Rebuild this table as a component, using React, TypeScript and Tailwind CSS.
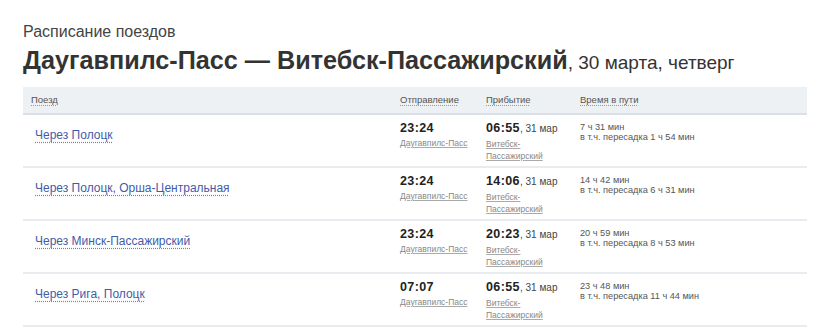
const rows = [
  { via: "Через Полоцк", dep: "23:24", arr: "06:55", dur: "7 ч 31 мин", wait: "в т.ч. пересадка 1 ч 54 мин" },
  { via: "Через Полоцк, Орша-Центральная", dep: "23:24", arr: "14:06", dur: "14 ч 42 мин", wait: "в т.ч. пересадка 6 ч 31 мин" },
  { via: "Через Минск-Пассажирский", dep: "23:24", arr: "20:23", dur: "20 ч 59 мин", wait: "в т.ч. пересадка 8 ч 53 мин" },
  { via: "Через Рига, Полоцк", dep: "07:07", arr: "06:55", dur: "23 ч 48 мин", wait: "в т.ч. пересадка 11 ч 44 мин" },
];

export default function App() {
  return (
    <div className="h-[332px] w-[820px] bg-white pl-[23px] pt-[22px] font-['Liberation_Sans',Arial,sans-serif] text-[#333]">
      <div className="text-[16px] leading-[19px] text-[#444]">Расписание поездов</div>
      <h1 className="mt-[4px] text-[19px] leading-[30px] text-[#333]">
        <span className="text-[25.2px] font-bold">Даугавпилс-Пасс — Витебск-Пассажирский</span>, 30 марта, четверг
      </h1>

      <div className="mt-[9px] w-[784px]">
        <div className="flex h-[28px] items-center border-b-2 border-[#d9e0e7] bg-[#edf1f4] text-[9.5px] text-[#555]">
          <div className="w-[369px] pl-[8px]">
            <span className="underline decoration-dotted decoration-[#999] underline-offset-2">Поезд</span>
          </div>
          <div className="w-[86px] pl-[8px]">
            <span className="underline decoration-dotted decoration-[#999] underline-offset-2">Отправление</span>
          </div>
          <div className="w-[94px] pl-[8px]">
            <span className="underline decoration-dotted decoration-[#999] underline-offset-2">Прибытие</span>
          </div>
          <div className="pl-[8px]">
            <span className="underline decoration-dotted decoration-[#999] underline-offset-2">Время в пути</span>
          </div>
        </div>

        {rows.map((r) => (
          <div key={r.via} className="flex h-[53px] border-b-2 border-[#e8ecf0] pt-[5px]">
            <div className="w-[369px] pl-[12px] pt-[2px]">
              <a className="text-[12px] leading-[15px] text-[#3f5ca8] underline decoration-dotted decoration-[#6b84c4] underline-offset-[3px]">
                {r.via}
              </a>
            </div>
            <div className="w-[86px] pl-[8px]">
              <div className="text-[12.5px] font-bold leading-[16px] tracking-[0.4px] text-[#222]">{r.dep}</div>
              <div className="mt-[1px] text-[8.5px] leading-[12px] text-[#888] underline decoration-[#aaa]">Даугавпилс-Пасс</div>
            </div>
            <div className="w-[94px] pl-[8px]">
              <div className="text-[12.5px] leading-[16px] text-[#222]">
                <span className="font-bold tracking-[0.4px]">{r.arr}</span>
                <span className="text-[10px] text-[#444]">, 31 мар</span>
              </div>
              <div className="mt-[1px] w-[66px] text-[8.5px] leading-[12px] text-[#888] underline decoration-[#aaa]">
                Витебск-Пассажирский
              </div>
            </div>
            <div className="pl-[8px] pt-[2px] text-[9.2px] leading-[10px] text-[#555]">
              <div>{r.dur}</div>
              <div>{r.wait}</div>
            </div>
          </div>
        ))}
      </div>
    </div>
  );
}
